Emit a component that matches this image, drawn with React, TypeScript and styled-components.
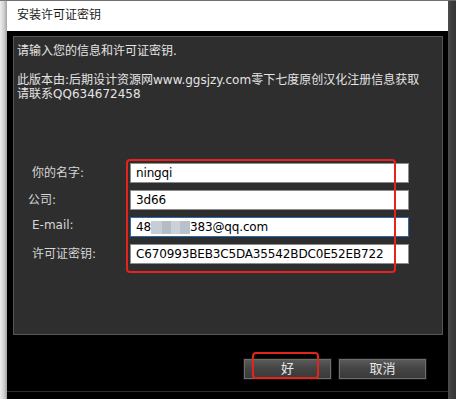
import type { ReactNode } from 'react';
import styled, { createGlobalStyle } from 'styled-components';

const GlobalStyle = createGlobalStyle`
  html, body {
    margin: 0;
    padding: 0;
    background: #000;
  }

  * {
    box-sizing: border-box;
  }
`;

const FONT = `"DejaVu Sans", "Noto Sans CJK SC", sans-serif`;

interface FieldRow {
  label: string;
  indent: number;
  value: ReactNode;
  focused?: boolean;
}

function App() {
  const rows: FieldRow[] = [
    { label: '你的名字:', indent: 15, value: 'ningqi' },
    { label: '公司:', indent: 11, value: '3d66' },
    {
      label: 'E-mail:',
      indent: 15,
      value: (
        <>
          48
          <Blur />
          383@qq.com
        </>
      ),
      focused: true,
    },
    { label: '许可证密钥:', indent: 15, value: 'C670993BEB3C5DA35542BDC0E52EB722' },
  ];

  return (
    <Screen>
      <GlobalStyle />
      <LeftShade />
      <Window>
        <TitleBar>安装许可证密钥</TitleBar>
        <Body>
          <Panel>
            <Intro>
              <p>请输入您的信息和许可证密钥.</p>
              <p>
                此版本由:后期设计资源网www.ggsjzy.com零下七度原创汉化注册信息获取
                <br />
                请联系QQ634672458
              </p>
            </Intro>
            <Form>
              {rows.map(({ label, indent, value, focused }) => (
                <Row key={label}>
                  <Label $indent={indent}>{label}</Label>
                  <Field $focused={focused}>{value}</Field>
                </Row>
              ))}
              <FormMark />
            </Form>
          </Panel>
          <Footer>
            <DialogButton type="button">
              好
              <ButtonMark />
            </DialogButton>
            <DialogButton type="button">取消</DialogButton>
          </Footer>
        </Body>
        <BottomRule />
      </Window>
      <RightShade />
    </Screen>
  );
}

const Screen = styled.div`
  display: flex;
  width: 456px;
  height: 399px;
  overflow: hidden;
  font-family: ${FONT};
`;

const LeftShade = styled.div`
  width: 7px;
  background: linear-gradient(to right, #ededed, #d2d2d2 55%, #a4a4a4);
  border-top: 1px solid #7a7a7a;
`;

const RightShade = styled.div`
  width: 8px;
  background: linear-gradient(to right, #4d4d4d, #3e3e3e 40%, #363636);
  border-top: 1px solid #6a6a6a;
`;

const Window = styled.div`
  display: flex;
  flex-direction: column;
  width: 441px;
  background: #000;
  border-top: 1px solid #707070;
`;

const TitleBar = styled.div`
  height: 30px;
  padding-left: 10px;
  background: #fff;
  color: #1a1a1a;
  font-size: 12px;
  line-height: 28px;
`;

const Body = styled.div`
  padding: 5px 5px 0 6px;
`;

const Panel = styled.div`
  height: 299px;
  padding: 7px 3px 0;
  border: 1px solid #575757;
  background: #2e2e2e;
`;

const Intro = styled.div`
  color: #e4e4e4;
  font-size: 12px;
  line-height: 14px;

  & p {
    margin: 0;
    white-space: nowrap;
  }

  & p + p {
    margin-top: 15px;
  }
`;

const Form = styled.div`
  position: relative;
  display: flex;
  flex-direction: column;
  gap: 7px;
  margin-top: 62px;
`;

const Row = styled.div`
  display: grid;
  grid-template-columns: 113px 279px;
  align-items: center;
  height: 20px;
`;

const Label = styled.span<{ $indent: number }>`
  margin-top: -4px;
  padding-left: ${({ $indent }) => $indent}px;
  color: #d6d6d6;
  font-size: 12px;
`;

const Field = styled.div<{ $focused?: boolean }>`
  display: flex;
  align-items: center;
  height: 20px;
  padding-left: 5px;
  border: 1px solid ${({ $focused }) => ($focused ? '#2a6bb0' : '#8c8c8c')};
  background: #fff;
  color: #000;
  font-size: 12px;
  letter-spacing: -0.15px;
  white-space: nowrap;
`;

const Blur = styled.span`
  display: inline-block;
  width: 39px;
  height: 13px;
  background: linear-gradient(
    to right,
    #c6cdd5 0 28%,
    #b4bcc6 28% 52%,
    #ccd1d8 52% 74%,
    #b8c0ca 74%
  );
`;

const FormMark = styled.div`
  position: absolute;
  left: 109px;
  top: -4px;
  width: 270px;
  height: 114px;
  border: 2px solid #e2241a;
  border-radius: 4px;
`;

const Footer = styled.div`
  display: flex;
  justify-content: flex-end;
  gap: 8px;
  height: 56px;
  padding: 24px 17px 0 0;
`;

const DialogButton = styled.button`
  position: relative;
  width: 87px;
  height: 20px;
  padding: 0;
  border: 1px solid #6e6e6e;
  box-shadow: 0 0 0 1px #151515;
  background: linear-gradient(#5a5a5a, #454545 45%, #3a3a3a);
  color: #e6e6e6;
  font-family: ${FONT};
  font-size: 13px;
  line-height: 18px;
`;

const ButtonMark = styled.span`
  position: absolute;
  left: 7px;
  top: -8px;
  width: 67px;
  height: 27px;
  border: 2px solid #e2241a;
  border-radius: 4px;
`;

const BottomRule = styled.div`
  margin-top: auto;
  height: 8px;
  border-top: 1px solid #2f2f2f;
`;

export default App;
